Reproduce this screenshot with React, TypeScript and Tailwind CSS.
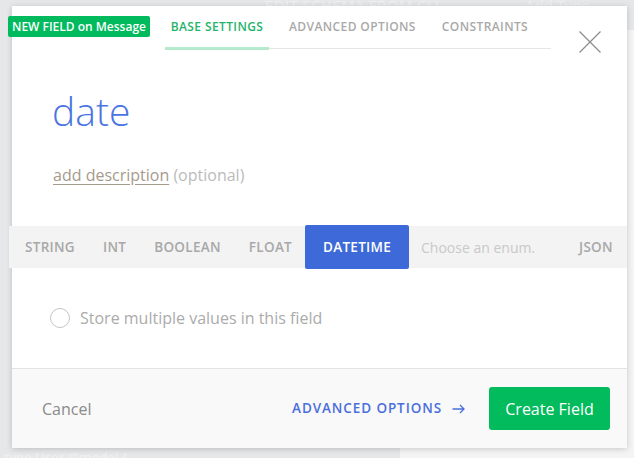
import React from "react";

export default function App() {
  const types = ["STRING", "INT", "BOOLEAN", "FLOAT"];
  return (
    <div
      className="relative w-[634px] h-[458px] overflow-hidden bg-[#e6e7e9]"
      style={{ fontFamily: '"Open Sans", "Noto Sans", sans-serif' }}
    >
      {/* faint background app */}
      <div className="absolute left-[400px] top-[30px] right-0 bottom-0 bg-[#f4f4f5]" />
      <div className="absolute left-[265px] top-[-6px] text-[15px] tracking-wide text-[#f0f0f1]">EDIT SCHEMA FROM CLI</div>
      <div className="absolute left-[525px] top-[-6px] text-[15px] text-[#f0f0f1]">Add Type</div>
      <div className="absolute left-[4px] top-[448px] text-[13px] font-semibold text-[#f0f0f1]">type User @model {"{"}</div>

      {/* modal */}
      <div className="absolute left-[12px] top-[6px] w-[615px] h-[442px] bg-white flex flex-col shadow-[0_1px_6px_rgba(0,0,0,0.18)]">
        {/* badge */}
        <div className="absolute left-[-4px] top-[10px] h-[21px] px-[4px] rounded-[2px] bg-[#01ba5d] text-white text-[12px] font-semibold leading-[21px] whitespace-nowrap">
          NEW FIELD on Message
        </div>

        {/* header */}
        <div className="flex items-start h-[62px]">
          <div className="ml-[153px] w-[386px] h-[43px] flex items-end border-b border-[#e5e5e5] text-[12px] font-semibold tracking-[0.4px]">
            <div className="relative w-[104px] h-full flex items-center justify-center text-[#1fb46a]">
              BASE SETTINGS
              <div className="absolute left-0 right-0 bottom-[-2px] h-[3px] bg-[#b6eacc]" />
            </div>
            <div className="h-full flex items-center ml-[20px] text-[#a9a9a9]">ADVANCED OPTIONS</div>
            <div className="h-full flex items-center ml-[26px] text-[#a9a9a9]">CONSTRAINTS</div>
          </div>
          <div className="ml-[28px] mt-[25px] w-[22px] h-[22px]">
            <svg width="22" height="22" viewBox="0 0 22 22">
              <path d="M0.5 0.5 L21.5 21.5 M21.5 0.5 L0.5 21.5" stroke="#8c8c8c" strokeWidth="1.2" fill="none" />
            </svg>
          </div>
        </div>

        {/* title */}
        <div className="pl-[40px] mt-[19px] text-[39px] leading-[47px] font-light text-[#4a74e2]">date</div>
        <div className="pl-[41px] mt-[31px] text-[16px] leading-[20px]">
          <span className="underline underline-offset-[3px] text-[#a69a8c] decoration-[#a69a8c]">add description</span>
          <span className="text-[#bbbbbb]"> (optional)</span>
        </div>

        {/* type bar */}
        <div className="mt-[41px] ml-[-3px] mr-0 h-[42px] bg-[#f3f3f3] flex items-stretch text-[13.5px] font-semibold tracking-[0.3px] text-[#a8a8a8]">
          <div className="flex items-center ml-[16px]">
            {types.map((t, i) => (
              <span key={t} className={i === 0 ? "" : "ml-[28px]"}>{t}</span>
            ))}
          </div>
          <div className="ml-[13px] mt-[-1px] h-[44px] w-[104px] rounded-[2px] bg-[#3e69d8] text-white flex items-center justify-center">
            DATETIME
          </div>
          <div className="flex items-center ml-[12px] w-[158px] font-normal tracking-normal text-[14px] text-[#c9c9c9]">
            Choose an enum.
          </div>
          <div className="flex items-center">JSON</div>
        </div>

        {/* list option */}
        <div className="flex items-center pl-[38px] mt-[40px] h-[20px]">
          <div className="w-[20px] h-[20px] rounded-full border border-[#c4c4c4]" />
          <span className="ml-[10px] text-[16px] text-[#ababab]">Store multiple values in this field</span>
        </div>

        {/* footer */}
        <div className="mt-auto h-[80px] border-t border-[#e2e2e2] bg-[#f9f9f9] flex items-center pl-[30px] pr-[17px]">
          <span className="text-[16px] text-[#8a8a8a]">Cancel</span>
          <div className="ml-auto flex items-center text-[13.5px] font-semibold tracking-[0.9px] text-[#4a6fdc]">
            ADVANCED OPTIONS
            <svg className="ml-[10px]" width="13" height="10" viewBox="0 0 13 10">
              <path d="M0.5 5 H12 M8 1 L12 5 L8 9" stroke="#4a6fdc" strokeWidth="1.3" fill="none" />
            </svg>
          </div>
          <div className="ml-[24px] h-[43px] w-[121px] rounded-[3px] bg-[#01bb5d] text-white text-[16px] flex items-center justify-center">
            Create Field
          </div>
        </div>
      </div>
    </div>
  );
}
